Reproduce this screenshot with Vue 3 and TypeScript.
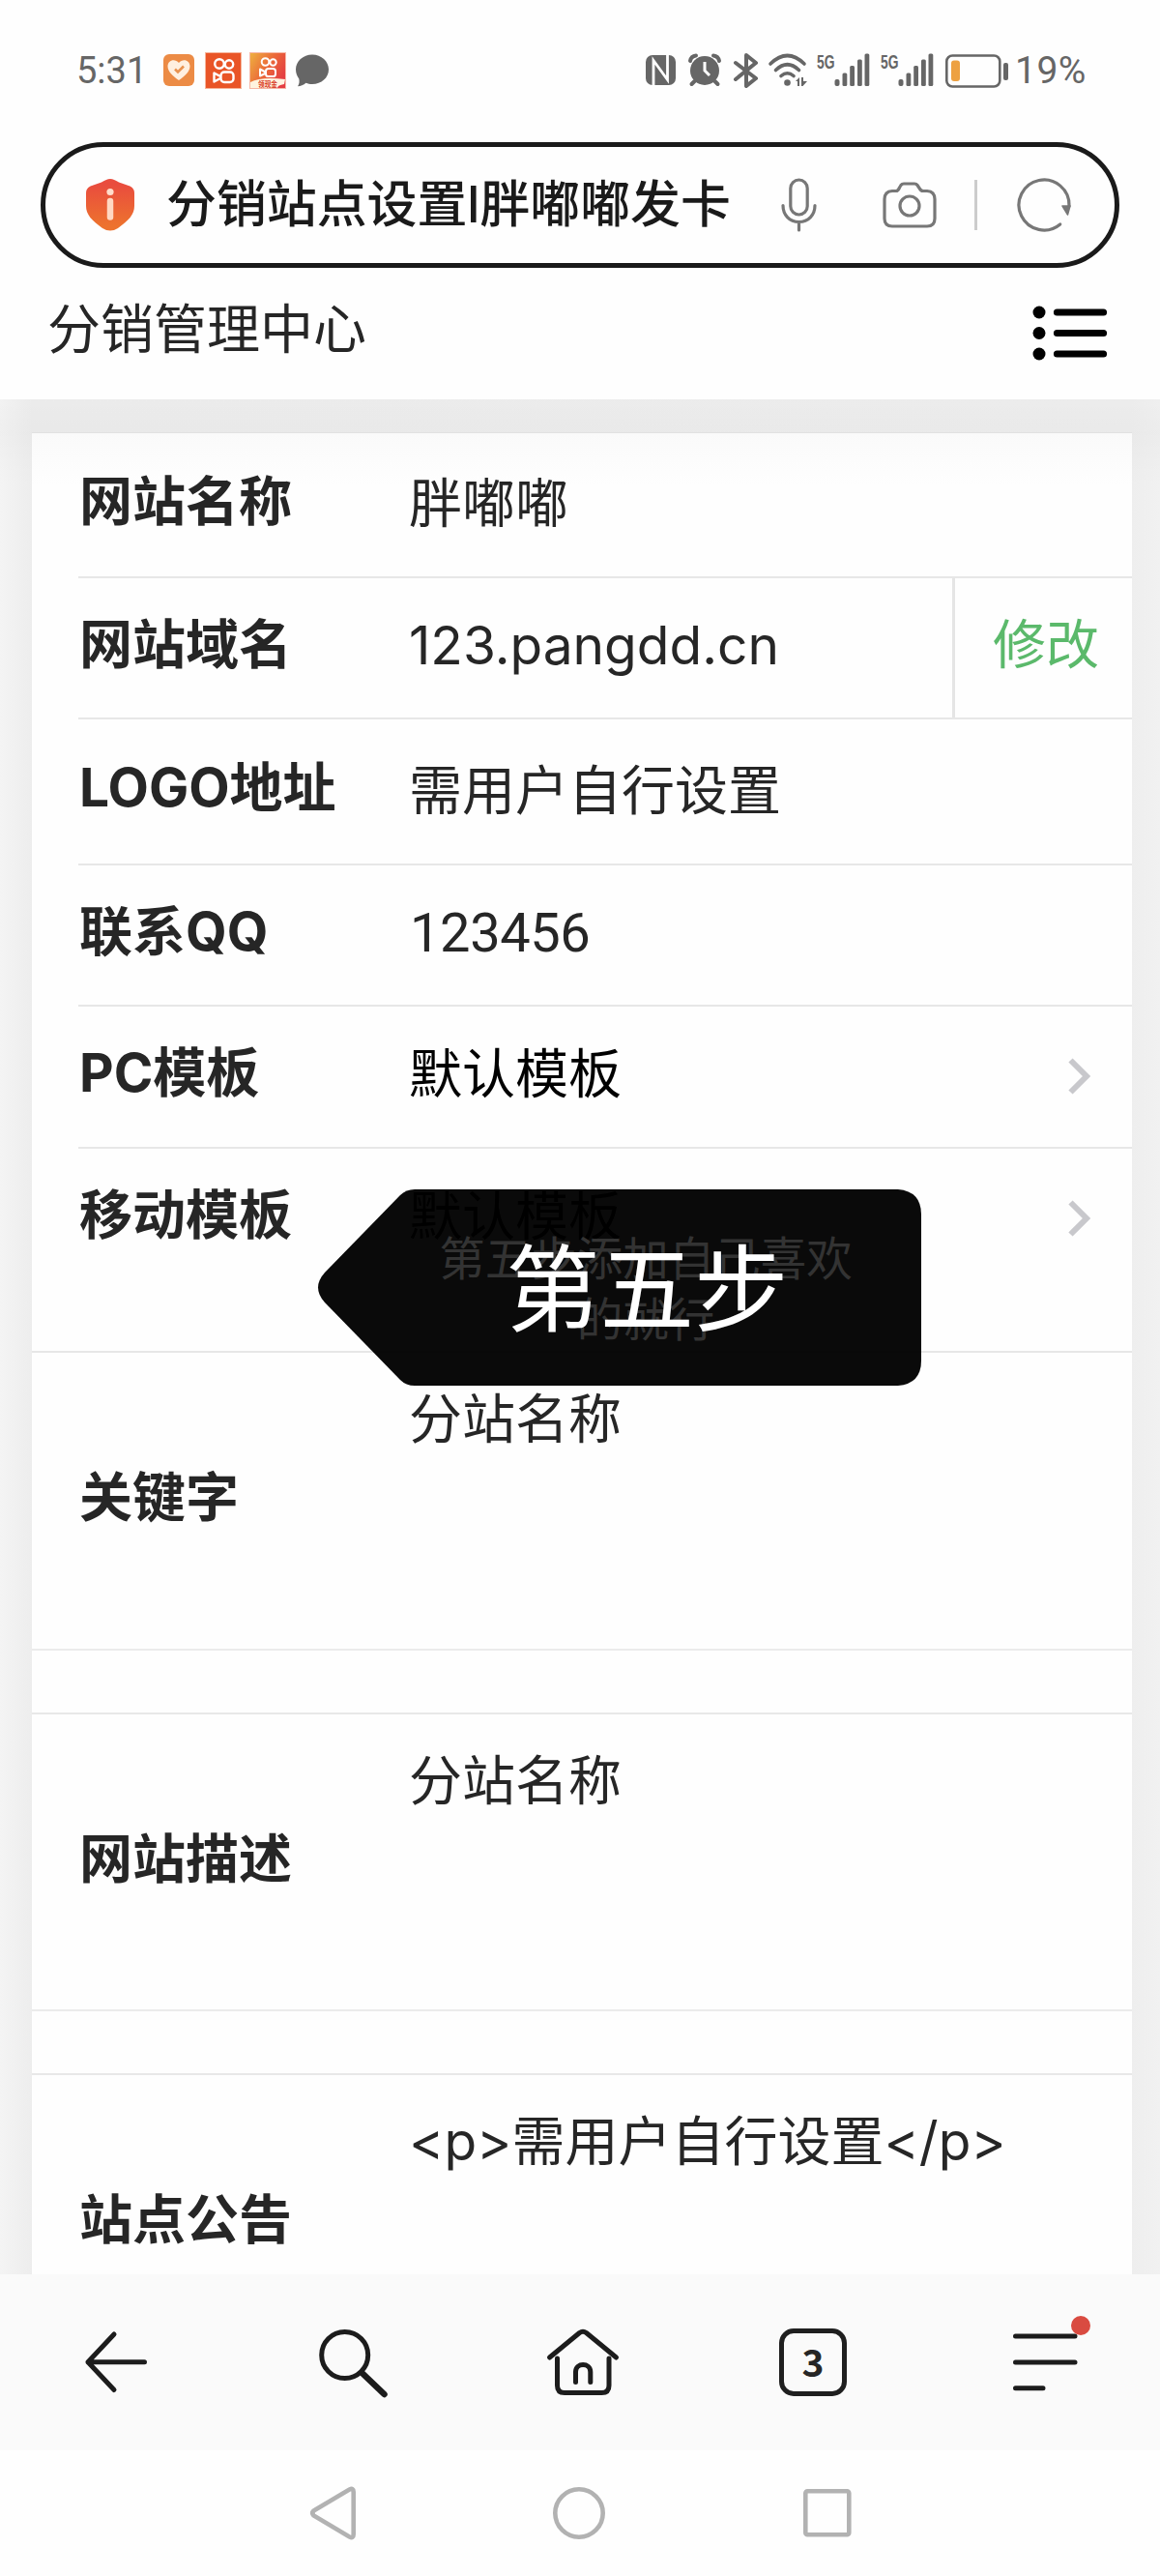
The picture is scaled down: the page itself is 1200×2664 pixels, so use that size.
<script setup lang="ts">
interface Field {
  label: string
  value: string
  kind: 'input' | 'action' | 'logo' | 'contact' | 'select' | 'mobile'
}
interface Area {
  label: string
  value: string
}

const fields: Field[] = [
  { label: '网站名称', value: '胖嘟嘟', kind: 'input' },
  { label: '网站域名', value: '123.pangdd.cn', kind: 'action' },
  { label: 'LOGO地址', value: '需用户自行设置', kind: 'logo' },
  { label: '联系QQ', value: '123456', kind: 'contact' },
  { label: 'PC模板', value: '默认模板', kind: 'select' },
  { label: '移动模板', value: '默认模板', kind: 'mobile' },
]

const areas: Area[] = [
  { label: '关键字', value: '分站名称' },
  { label: '网站描述', value: '分站名称' },
  { label: '站点公告', value: '<p>需用户自行设置</p>' },
]
</script>

<template>
  <div class="screen">
    <header class="status">
      <span class="clock">5:31</span>
      <svg class="app-icon a1" width="32" height="33" viewBox="0 0 32 33">
        <rect width="32" height="33" rx="6" fill="#ec8b45" />
        <path d="M16 27C10 23 4.500 18 4.500 12.500C4.500 6 12 4 16 9C20 4 27.500 6 27.500 12.500C27.500 18 22 23 16 27Z" fill="#fff0e0" />
        <path d="M12 15.500L15 18.500L21 12.500" fill="none" stroke="#e9924f" stroke-width="2.600" />
      </svg>
      <svg class="app-icon a2" width="38" height="38" viewBox="0 0 38 38">
        <rect width="38" height="38" fill="#f6b49a" />
        <rect x="1" y="1" width="36" height="36" fill="#e95527" />
        <g fill="none" stroke="#fff" stroke-width="2.400" stroke-linejoin="round">
          <circle cx="15" cy="12" r="4.800" /><circle cx="25" cy="12.500" r="4.200" />
          <rect x="16.500" y="20.500" width="13" height="10.500" rx="3.500" />
          <path d="M16 25L9.500 21.500V30.500L16 27" />
        </g>
      </svg>
      <svg class="app-icon a3" width="38" height="38" viewBox="0 0 38 38">
        <defs>
          <linearGradient id="promo" x1="0" y1="0" x2="1" y2="0.600">
            <stop offset="0" stop-color="#eeb040" /><stop offset=".55" stop-color="#eb6839" /><stop offset="1" stop-color="#e43e42" />
          </linearGradient>
        </defs>
        <rect width="38" height="38" fill="#f7b7a5" />
        <rect x="1" y="1" width="36" height="36" fill="url(#promo)" />
        <g fill="none" stroke="#fff" stroke-width="2" stroke-linejoin="round">
          <circle cx="16.500" cy="10" r="3.800" /><circle cx="24.500" cy="10.500" r="3.200" />
          <rect x="17" y="17" width="10" height="8" rx="2.600" />
          <path d="M16.500 20.500L11 17.500V24.500L16.500 22" />
        </g>
        <path d="M1 31Q12 25 37 28L36 33Q29 34 29 37H1Z" fill="#fff3df" />
        <text x="9" y="36" class="promo-text" textLength="20" lengthAdjust="spacingAndGlyphs">领现金</text>
      </svg>
      <svg class="app-icon a4" width="34" height="34" viewBox="0 0 34 34">
        <path d="M17 .500C26.500 .500 34 7.500 34 15.800C34 24.500 26.500 31 17 31C14.500 31 12.500 30.600 10.500 29.800C8 32 5 33.200 2 33.300C3.500 31 4 28.500 3.300 25.500C1.200 22.800 0 19.500 0 15.800C0 7.500 7.500 .500 17 .500Z" fill="#666" />
      </svg>

      <svg class="sys s1" width="31" height="31" viewBox="0 0 31 31">
        <rect x="0" y="0" width="31" height="31" rx="7" fill="#666" />
        <path d="M8 31V5.500L22.500 25.500V0" fill="none" stroke="#fff" stroke-width="2.800" />
      </svg>
      <svg class="sys s2" width="34" height="33" viewBox="0 0 34 33">
        <circle cx="17" cy="17" r="15" fill="#666" />
        <path d="M2 7Q3 2 8 1.500M26 1.500Q31 2 32 7" fill="none" stroke="#666" stroke-width="4" stroke-linecap="round" />
        <path d="M6.500 28L3.500 31M27.500 28L30.500 31" stroke="#666" stroke-width="4" stroke-linecap="round" />
        <path d="M17 8V17L22 22" fill="none" stroke="#fff" stroke-width="3" />
      </svg>
      <svg class="sys s3" width="26" height="38" viewBox="0 0 26 38">
        <path d="M2 11L23 27L13 35V3L23 11L2 28" fill="none" stroke="#666" stroke-width="4" stroke-linecap="round" stroke-linejoin="round" />
      </svg>
      <svg class="sys s4" width="41" height="36" viewBox="0 0 41 36">
        <g fill="none" stroke="#666" stroke-width="3.600" stroke-linecap="round">
          <path d="M2 11Q19.500 -6 37 11" /><path d="M7.500 17.500Q19.500 6 31.500 17.500" /><path d="M13 23.500Q19.500 18 26 23.500" />
        </g>
        <circle cx="19.500" cy="30.500" r="3.300" fill="#666" />
        <path d="M28 29L32 25V34H30V29ZM34 25V34H35.500L40 29H36V25Z" fill="#666" />
      </svg>
      <svg v-for="n in 2" :key="n" class="sys signal" width="55" height="36" viewBox="0 0 55 36">
        <text x="0" y="16.500" class="g5" textLength="18.500" lengthAdjust="spacingAndGlyphs">5G</text>
        <g fill="#666">
          <rect x="18.500" y="28" width="5" height="7" rx="2" /><rect x="26.500" y="21.500" width="4.800" height="13.500" rx="1.500" />
          <rect x="34.200" y="14" width="4.800" height="21" rx="1.500" /><rect x="42" y="7.500" width="4.800" height="27.500" rx="1.500" />
          <rect x="49.500" y="1.500" width="4.800" height="33.500" rx="1.500" />
        </g>
      </svg>
      <svg class="sys battery" width="66" height="35" viewBox="0 0 66 35">
        <rect x="1.300" y="1.500" width="55" height="32" rx="6" fill="none" stroke="#666" stroke-width="2.600" />
        <rect x="6" y="6.500" width="9" height="21.500" rx="3" fill="#eda142" />
        <rect x="60" y="9" width="5" height="18" rx="2" fill="#666" />
      </svg>
      <span class="percent">19%</span>
    </header>

    <div class="address">
      <svg class="shield" width="50" height="54" viewBox="0 0 50 54">
        <defs>
          <linearGradient id="warn" x1="0" y1="0" x2="0" y2="1">
            <stop offset=".1" stop-color="#e94c3e" /><stop offset=".9" stop-color="#ed722e" />
          </linearGradient>
        </defs>
        <path d="M25 0C28 0 30 1.500 34 3.500L44 7C48 8.500 50 10.500 50 15V28C50 37 44 43 33 51Q25 56 17 51C6 43 0 37 0 28V15C0 10.500 2 8.500 6 7L16 3.500C20 1.500 22 0 25 0Z" fill="url(#warn)" />
        <circle cx="25" cy="13.500" r="3.600" fill="#ffddcb" />
        <path d="M25 23V39.500" stroke="#ffd8c2" stroke-width="6.500" stroke-linecap="round" />
      </svg>
      <span class="page-title">分销站点设置l胖嘟嘟发卡</span>
      <svg class="mic" width="37" height="56" viewBox="0 0 37 56">
        <g fill="none" stroke="#777" stroke-width="3.200" stroke-linecap="round">
          <rect x="9.800" y="2" width="17.400" height="36" rx="8.700" />
          <path d="M2 28.500C2 38 8.500 45.500 18.500 45.500S35 38 35 28.500M18.500 46V54" />
        </g>
      </svg>
      <svg class="camera" width="56" height="48" viewBox="0 0 56 48">
        <g fill="none" stroke="#777" stroke-width="3.200" stroke-linejoin="round">
          <path d="M10 9.500H14Q16 9.500 17.500 6L19 3.500Q20 2 22 2H33Q35 2 36 3.500L38 6.500Q39.500 9.500 42 9.500H46Q54 10 54 18V38Q54 46 46 46H10Q2 46 2 38V18Q2 10 10 9.500Z" />
          <circle cx="28" cy="25" r="10" />
        </g>
      </svg>
      <i class="split"></i>
      <svg class="reload" width="56" height="56" viewBox="0 0 56 56">
        <path d="M44.700 47.900A26 26 0 1 1 54 29" fill="none" stroke="#777" stroke-width="3.200" stroke-linecap="round" />
        <path d="M47 29H55L52.500 38Z" fill="#777" stroke="#777" stroke-width="1.500" stroke-linejoin="round" />
      </svg>
    </div>

    <div class="title-bar">
      <h1>分销管理中心</h1>
      <svg class="list-icon" width="78" height="58" viewBox="0 0 78 58">
        <g><circle cx="7" cy="8" r="6.500" /><circle cx="7" cy="29.500" r="6.500" /><circle cx="7" cy="51" r="6.500" /></g>
        <path d="M25.500 8H73.500M25.500 29.500H73.500M25.500 51H73.500" stroke="#000" stroke-width="7.200" stroke-linecap="round" />
      </svg>
    </div>

    <main class="page">
      <section class="card">
        <div v-for="f in fields" :key="f.label" class="row" :class="f.kind">
          <label>{{ f.label }}</label>
          <span class="value">{{ f.value }}</span>
          <a v-if="f.kind === 'action'" class="edit">修改</a>
          <svg v-if="f.kind === 'select' || f.kind === 'mobile'" class="chevron" width="24" height="38" viewBox="0 0 24 38">
            <path d="M2.500 2.500L19 19L2.500 35.500" fill="none" stroke="#c8c8cc" stroke-width="6" />
          </svg>
          <div v-if="f.kind === 'mobile'" class="callout">
            <svg class="callout-shape" width="624" height="203" viewBox="0 0 624 203">
              <path d="M100 0H600Q624 2 624 26V177Q624 201 600 203H100Q91 203 85 197L7 117Q-7 101.500 7 86L85 6Q91 0 100 0Z" fill="#000" fill-opacity=".96" />
            </svg>
            <p class="hint">第五步添加自己喜欢<br />的就行</p>
            <strong class="step">第五步</strong>
          </div>
        </div>
        <div v-for="a in areas" :key="a.label" class="area">
          <label>{{ a.label }}</label>
          <span class="value">{{ a.value }}</span>
        </div>
      </section>
    </main>

    <nav class="toolbar">
      <svg class="t-back" width="64" height="64" viewBox="88 2411 64 64">
        <path d="M118 2414L91 2442.700L118 2471.500M91 2442.700H149.500" />
      </svg>
      <svg class="t-search" width="72" height="72" viewBox="330 2407 72 72">
        <ellipse cx="356.700" cy="2435.500" rx="24" ry="24" /><path d="M375 2454.500L397.500 2476" stroke-width="6.500" />
      </svg>
      <svg class="t-home" width="76" height="72" viewBox="565 2407 76 72">
        <path d="M568.500 2438L599.500 2412.500Q603 2410 606.500 2412.500L637.500 2438M576.500 2439V2467Q576.500 2474.500 584 2474.500H622.500Q630 2474.500 630 2467V2439M595.500 2463.500V2453C595.500 2443 610.800 2443 610.800 2453V2463.500" />
      </svg>
      <span class="tabs">3</span>
      <svg class="t-menu" width="82" height="80" viewBox="1047 2394 82 80">
        <path d="M1050.500 2416H1112M1050.500 2443H1112M1050.500 2469.700H1079" />
        <circle cx="1118" cy="2405" r="10" class="dot" />
      </svg>
    </nav>

    <footer class="system-nav">
      <svg class="n-back" width="50" height="58" viewBox="320 2570 50 58"><path d="M324.500 2596.500L361.500 2574.500Q365.700 2572.500 365.700 2577V2621Q365.700 2625.500 361.500 2623.500L324.500 2601.500Q322 2599 324.500 2596.500Z" /></svg>
      <svg class="n-home" width="56" height="56" viewBox="0 0 56 56"><circle cx="28" cy="28" r="24.700" /></svg>
      <svg class="n-recent" width="50" height="50" viewBox="0 0 50 50"><rect x="2.300" y="2.300" width="45" height="45" rx="2" /></svg>
    </footer>
  </div>
</template>

<style>
body { background: #fff; }
</style>

<style scoped>
.screen {
  width: 1200px;
  height: 2664px;
  overflow: hidden;
  display: flex;
  flex-direction: column;
  background: #fefefe;
  color: #262626;
  font-family: "Noto Sans CJK SC", "Noto Sans", sans-serif;
}
svg { display: block; flex: none; overflow: visible; }
.status {
  height: 147px;
  box-sizing: border-box;
  padding: 54px 0 0 79px;
  display: flex;
  align-items: flex-start;
  color: #666;
  font-family: Roboto, sans-serif;
}
.clock { width: 90px; font-size: 38px; line-height: 39px; }
.a1 { margin-top: 2px; }
.a2 { margin-left: 11px; }
.a3 { margin-left: 8px; }
.a4 { margin: 2px 0 0 10px; }
.promo-text { font-family: "Noto Sans CJK SC", sans-serif; font-size: 8px; font-weight: 700; fill: #d93a25; }
.s1 { margin: 3px 0 0 328px; }
.s2 { margin: 2px 0 0 13px; }
.s3 { margin-left: 13px; }
.s4 { margin: 1px 0 0 10px; }
.signal { margin: 0 0 0 9px; }
.signal + .signal { margin-left: 11px; }
.g5 { font: 700 21px "Liberation Sans", sans-serif; fill: #666; }
.battery { margin: 2px 0 0 12px; }
.percent { margin-left: 6px; font-size: 39px; line-height: 39px; letter-spacing: 0.5px; }
.address {
  width: 1116px;
  height: 130px;
  box-sizing: border-box;
  flex: none;
  margin-left: 42px;
  border: 5px solid #1a1a1a;
  border-radius: 65px;
  display: flex;
  align-items: center;
  color: #1a1a1a;
}
.shield { margin-left: 42px; }
.page-title {
  width: 601px;
  margin: 0 0 0 33px;
  font-family: Inter, "Noto Sans CJK SC", sans-serif;
  font-size: 51.900px;
  font-weight: 500;
  line-height: 60px;
  white-space: nowrap;
}
.mic { margin-left: 35px; }
.camera { margin-left: 68px; }
.split { width: 3px; height: 52px; margin-left: 39px; background: #ccc; }
.reload { margin-left: 41px; }
.title-bar {
  height: 136px;
  flex: none;
  display: flex;
  justify-content: space-between;
  align-items: flex-start;
  padding: 0 54px 0 49px;
}
h1 { margin: 29px 0 0; font-size: 55px; font-weight: 400; line-height: 60px; }
.list-icon { margin-top: 38px; }
.page {
  height: 1939px;
  flex: none;
  overflow: hidden;
  box-sizing: border-box;
  padding: 35px 29px 0 33px;
  background:
    linear-gradient(to bottom, rgba(0, 0, 0, 0.008), rgba(0, 0, 0, 0.02) 35px, transparent 90px),
    linear-gradient(to right, #f4f4f4, #ededed 33px, #eeeeee 1171px, #f1f1f1);
}
.card {
  background: linear-gradient(to bottom, #fafafa, #fefefe 54px);
  box-shadow: 0 -1px 0 #e1e1e1;
}
.row, .area { display: flex; position: relative; box-sizing: border-box; font-size: 55px; line-height: 60px; }
.row { height: 147px; padding-left: 49px; }
.row::after {
  content: "";
  position: absolute;
  left: 48px;
  right: 0;
  bottom: 0;
  height: 2px;
  background: #e7e7e7;
}
.input { height: 150px; }
.action { height: 146px; }
.logo { height: 151px; }
.contact { height: 146px; }
.mobile { height: 211px; }
.mobile::after { left: 0; }
label, .value, .edit { font-family: Inter, "Noto Sans CJK SC", sans-serif; }
label { width: 341px; flex: none; padding-top: 38px; font-weight: 700; }
.value { flex: 1; padding-top: 39px; white-space: nowrap; }
.input label, .logo label { padding-top: 40px; }
.input .value { padding-top: 42px; }
.logo .value { padding-top: 43px; }
.contact .value {
  padding: 40px 0 0 1px;
  font-family: Roboto, sans-serif;
  font-size: 56px;
  letter-spacing: -0.400px;
}
.select .value, .mobile .value { color: #000; }
.edit {
  width: 186px;
  box-sizing: border-box;
  padding: 38px 0 0 39px;
  border-left: 3px solid #e5e5e5;
  color: #5bb96b;
}
.chevron { margin: 53px 42px 0 0; }
.callout {
  position: absolute;
  left: 296px;
  top: 42px;
  width: 624px;
  height: 203px;
  z-index: 1;
  color: #fff;
}
.callout-shape { position: absolute; left: 0; top: 0; }
.hint {
  position: absolute;
  left: 99px;
  top: 37px;
  width: 480px;
  margin: 0;
  text-align: center;
  font-size: 47.500px;
  line-height: 63px;
  color: #333;
}
.step {
  position: absolute;
  left: 194px;
  top: 42px;
  font-size: 97.500px;
  font-weight: 400;
  line-height: 110px;
  white-space: nowrap;
}
.area { height: 308px; padding-left: 49px; border-bottom: 2px solid #ebebeb; }
.area + .area { margin-top: 66px; height: 307px; box-shadow: 0 -2px 0 #e8e8e8; }
.area label { padding-top: 119px; }
.area .value { padding-top: 38px; }
.toolbar {
  height: 182px;
  flex: none;
  display: flex;
  align-items: flex-start;
  background: #fafafa;
}
.toolbar svg { fill: none; stroke: #1c1c1c; stroke-width: 5; stroke-linecap: round; stroke-linejoin: round; }
.t-back { margin: 59px 0 0 88px; }
.t-search { margin: 55px 0 0 178px; }
.t-home { margin: 55px 0 0 163px; }
.tabs {
  width: 70px;
  height: 70px;
  box-sizing: border-box;
  margin: 56px 0 0 165px;
  border: 5px solid #1f1f1f;
  border-radius: 15px;
  font-size: 39px;
  font-weight: 700;
  line-height: 56px;
  text-align: center;
}
.t-menu { margin: 42px 0 0 171px; }
.toolbar .dot { fill: #d94b41; stroke: none; }
.system-nav { height: 130px; flex: none; display: flex; align-items: flex-start; background: #fefefe; }
.system-nav svg { fill: none; stroke: #b2b2b2; stroke-width: 4.600; }
.n-back { margin: 36px 0 0 320px; }
.n-home { margin: 37px 0 0 201px; }
.n-recent { margin: 40px 0 0 204px; }
</style>
